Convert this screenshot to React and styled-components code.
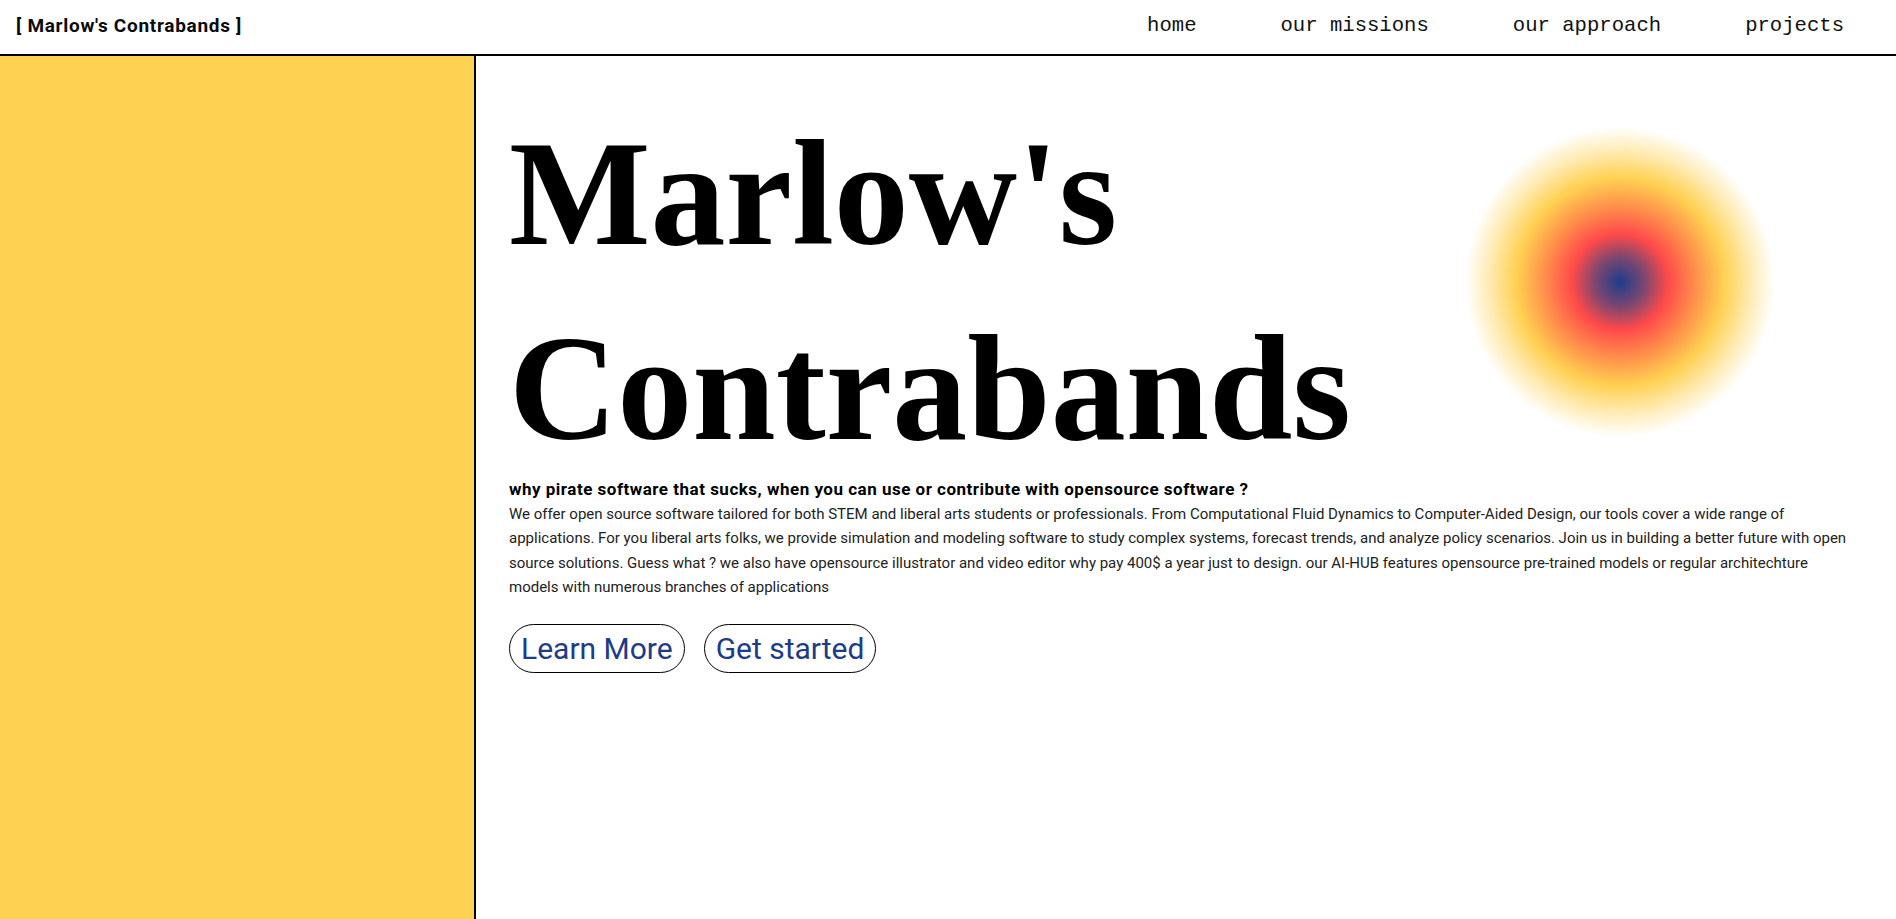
import React from "react";
import styled, { createGlobalStyle } from "styled-components";

const GlobalStyle = createGlobalStyle`
  html, body {
    margin: 0;
    padding: 0;
    background: #fff;
  }
  body {
    font-family: Roboto, "Liberation Sans", sans-serif;
    color: #000;
  }
`;

const links = ["home", "our missions", "our approach", "projects"];

const App = () => {
  return (
    <>
      <GlobalStyle />
      <Page>
        <Header>
          <Logo>[ Marlow's Contrabands ]</Logo>
          <Nav>
            {links.map((l) => (
              <NavLink key={l} href="#">{l}</NavLink>
            ))}
          </Nav>
        </Header>
        <Body>
          <Sidebar />
          <Main>
            <Hero>
              <Title>
                Marlow's
                <br />
                Contrabands
              </Title>
              <Orb />
            </Hero>
            <Tagline>
              why pirate software that sucks, when you can use or contribute with opensource software ?
            </Tagline>
            <Text>
              We offer open source software tailored for both STEM and liberal arts students or
              professionals. From Computational Fluid Dynamics to Computer-Aided Design, our tools
              cover a wide range of applications. For you liberal arts folks, we provide simulation
              and modeling software to study complex systems, forecast trends, and analyze policy
              scenarios. Join us in building a better future with open source solutions. Guess what ?
              we also have opensource illustrator and video editor why pay 400$ a year just to
              design. our AI-HUB features opensource pre-trained models or regular architechture
              models with numerous branches of applications
            </Text>
            <Actions>
              <PillButton>Learn More</PillButton>
              <PillButton>Get started</PillButton>
            </Actions>
          </Main>
        </Body>
      </Page>
    </>
  );
};

export default App;

const Page = styled.div`
  min-height: 100vh;
  display: flex;
  flex-direction: column;
`;

const Header = styled.header`
  height: 56px;
  display: flex;
  justify-content: space-between;
  align-items: center;
  padding: 0 52px 4px 16px;
  box-sizing: border-box;
  border-bottom: 2px solid #000;
  flex-shrink: 0;
`;

const Logo = styled.div`
  font-family: Roboto, sans-serif;
  font-weight: 700;
  font-size: 19px;
  letter-spacing: 0.7px;
  color: #0a0a0a;
`;

const Nav = styled.nav`
  display: flex;
  gap: 84px;
`;

const NavLink = styled.a`
  font-family: "Liberation Mono", "DejaVu Sans Mono", monospace;
  font-size: 20.6px;
  color: #111;
  text-decoration: none;
`;

const Body = styled.div`
  flex: 1;
  display: flex;
`;

const Sidebar = styled.aside`
  width: 474px;
  flex-shrink: 0;
  background: #ffd152;
  border-right: 2px solid #000;
`;

const Main = styled.main`
  flex: 1;
  padding: 40px 36px 0 33px;
`;

const Hero = styled.div`
  display: flex;
  justify-content: space-between;
  align-items: flex-start;
`;

const Title = styled.h1`
  margin: 0 0 -8px 0;
  font-family: "Liberation Serif", serif;
  font-weight: 700;
  font-size: 150px;
  line-height: 195px;
  letter-spacing: 0px;
`;

const Orb = styled.div`
  width: 310px;
  height: 310px;
  margin: 31px 85px 0 0;
  border-radius: 50%;
  flex-shrink: 0;
  background: radial-gradient(
    circle closest-side,
    #1d3c8c 0%,
    #7c4770 16%,
    #ff4a4a 31%,
    #ff8c4a 48%,
    #ffd152 67%,
    rgba(255, 209, 82, 0.45) 84%,
    rgba(255, 209, 82, 0) 100%
  );
`;

const Tagline = styled.h2`
  margin: 0;
  font-family: Roboto, sans-serif;
  font-weight: 700;
  font-size: 17px;
  letter-spacing: 0.5px;
  line-height: 22px;
`;

const Text = styled.p`
  margin: 2px 0 0 0;
  font-family: Roboto, sans-serif;
  font-size: 15px;
  line-height: 24.3px;
  color: #222;
`;

const Actions = styled.div`
  display: flex;
  gap: 19px;
  margin-top: 25px;
`;

const PillButton = styled.button`
  font-family: Roboto, sans-serif;
  font-size: 30px;
  line-height: 35px;
  color: #1d3b8b;
  background: #fff;
  border: 1px solid #000;
  border-radius: 25px;
  padding: 6px 11px;
  cursor: pointer;
`;
